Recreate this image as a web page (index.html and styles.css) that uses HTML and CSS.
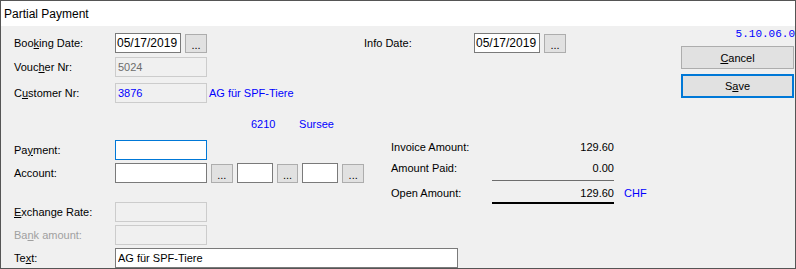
FILE: index.html
```html
<!DOCTYPE html>
<html>
<head>
  <meta charset="UTF-8">
  <title>Partial Payment</title>
  <link rel="stylesheet" href="styles.css">
</head>
<body>
  <div class="window">
    <div class="titlebar">Partial Payment</div>

    <div class="client">
      <div class="form">
        <!-- left column: booking data -->
        <div class="col-left">
          <div class="row">
            <span class="label">Boo<u>k</u>ing Date:</span>
            <input class="field date" value="05/17/2019" readonly>
            <button class="dots">...</button>
          </div>
          <div class="row row-voucher">
            <span class="label">Vouc<u>h</u>er Nr:</span>
            <input class="field wide disabled" value="5024" readonly>
          </div>
          <div class="row row-customer">
            <span class="label">C<u>u</u>stomer Nr:</span>
            <input class="field wide disabled link" value="3876" readonly>
            <span class="customer-name">AG für SPF-Tiere</span>
          </div>
          <div class="row-city">
            <span class="zip">6210</span>
            <span class="city">Sursee</span>
          </div>
          <div class="row row-payment">
            <span class="label">Pa<u>y</u>ment:</span>
            <input class="field wide focused" value="" readonly>
          </div>
          <div class="row row-account">
            <span class="label">Account:</span>
            <input class="field wide" value="" readonly>
            <button class="dots">...</button>
            <input class="field small" value="" readonly>
            <button class="dots">...</button>
            <input class="field small" value="" readonly>
            <button class="dots">...</button>
          </div>
          <div class="row row-exchange">
            <span class="label"><u>E</u>xchange Rate:</span>
            <input class="field wide disabled" value="" readonly>
          </div>
          <div class="row row-bank">
            <span class="label muted">Ba<u>n</u>k amount:</span>
            <input class="field wide disabled" value="" readonly>
          </div>
        </div>

        <!-- middle column: info date and totals -->
        <div class="col-mid">
          <div class="row">
            <span class="label label-info">Info Date:</span>
            <input class="field date" value="05/17/2019" readonly>
            <button class="dots">...</button>
          </div>

          <div class="amounts">
            <div class="amount-row">
              <span class="amount-label">Invoice Amount:</span>
              <span class="amount-value">129.60</span>
            </div>
            <div class="amount-row">
              <span class="amount-label">Amount Paid:</span>
              <span class="amount-value">0.00</span>
            </div>
            <div class="rule"></div>
            <div class="amount-row amount-open">
              <span class="amount-label">Open Amount:</span>
              <span class="amount-value">129.60</span>
              <span class="currency">CHF</span>
            </div>
            <div class="rule rule-total"></div>
          </div>
        </div>

        <div class="row row-text">
          <span class="label">Te<u>x</u>t:</span>
          <input class="field text" value="AG für SPF-Tiere" readonly>
        </div>
      </div>

      <div class="actions">
        <div class="version">5.10.06.0</div>
        <button class="action"><u>C</u>ancel</button>
        <button class="action default">S<u>a</u>ve</button>
      </div>
    </div>
  </div>
</body>
</html>
```

FILE: styles.css
```css
:root {
  --face: #f0f0f0;
  --frame: #555555;
  --edge: #7a7a7a;
  --edge-off: #cccccc;
  --btn: #e1e1e1;
  --btn-edge: #adadad;
  --accent: #0078d7;
  --link: #0000ff;
}

html, body {
  margin: 0;
  padding: 0;
}

body {
  font-family: 'Liberation Sans', Arial, sans-serif;
  font-size: 11px;
  color: #000;
  background-color: var(--face);
}

.window {
  width: 796px;
  height: 269px;
  box-sizing: border-box;
  border: 1px solid var(--frame);
  background-color: var(--face);
  overflow: hidden;
}

.titlebar {
  height: 25px;
  display: flex;
  align-items: center;
  padding-left: 3px;
  background-color: #fff;
  font-size: 12px;
}

.client {
  display: flex;
  height: 242px;
}

.form {
  flex: 1;
  display: grid;
  grid-template-columns: 350px 1fr;
  align-content: start;
  padding: 7px 0 0 13px;
}

.row {
  display: flex;
  align-items: center;
  height: 20px;
}

.label {
  width: 101px;
  flex-shrink: 0;
  white-space: nowrap;
}

.label.muted {
  color: #a0a0a0;
}

u {
  text-decoration-thickness: 1px;
  text-underline-offset: 1px;
}

/* text boxes */
.field {
  box-sizing: border-box;
  height: 20px;
  margin: 0;
  padding: 0 2px;
  border: 1px solid var(--edge);
  background-color: #fff;
  font-family: inherit;
  font-size: 11px;
  color: #000;
  outline: none;
}

.field.date {
  width: 66px;
  font-size: 12px;
  padding: 0 1px;
}

.field.wide {
  width: 92px;
}

.field.small {
  width: 36px;
}

.field.text {
  width: 343px;
}

.field.disabled {
  border-color: var(--edge-off);
  background-color: var(--face);
  color: #6d6d6d;
}

.field.link {
  color: var(--link);
}

.field.focused {
  border-color: var(--accent);
}

.dots {
  box-sizing: border-box;
  width: 22px;
  height: 19px;
  margin: 0 0 0 4px;
  padding: 4px 0 0;
  border: 1px solid var(--btn-edge);
  background-color: var(--btn);
  font-family: inherit;
  font-size: 11px;
  line-height: 11px;
  color: #000;
}

.row-account .field.small {
  margin-left: 4px;
}

.row-voucher { margin-top: 4px; }
.row-customer { margin-top: 6px; }
.row-payment { margin-top: 10px; }
.row-account { margin-top: 3px; }
.row-exchange { margin-top: 19px; }
.row-bank { margin-top: 3px; }

.row-text {
  grid-column: 1 / -1;
  margin-top: 3px;
}

.customer-name {
  margin-left: 2px;
  color: var(--link);
  white-space: nowrap;
}

.row-city {
  height: 12px;
  margin-top: 15px;
  padding-left: 237px;
  line-height: 12px;
  color: var(--link);
}

.zip {
  display: inline-block;
  width: 45px;
}

/* middle column */
.label-info {
  width: 110px;
}

.amounts {
  margin-top: 87px;
  padding-left: 27px;
}

.amount-row {
  display: flex;
  align-items: center;
  height: 14px;
}

.amount-row + .amount-row {
  margin-top: 7px;
}

.amount-label {
  width: 101px;
}

.amount-value {
  width: 122px;
  text-align: right;
}

.currency {
  margin-left: 10px;
  color: var(--link);
}

.rule {
  width: 122px;
  height: 1px;
  margin: 5px 0 0 101px;
  background-color: #6d6d6d;
}

.amount-open {
  margin-top: 5px;
}

.rule-total {
  height: 2px;
  margin-top: 2px;
  background-color: #000;
}

/* right column */
.actions {
  width: 113px;
  margin-right: 1px;
  padding-top: 2px;
  display: flex;
  flex-direction: column;
}

.version {
  height: 13px;
  line-height: 13px;
  text-align: right;
  margin-right: -1px;
  font-family: 'Liberation Mono', 'Courier New', monospace;
  font-size: 11px;
  color: var(--link);
}

.action {
  box-sizing: border-box;
  height: 23px;
  margin: 5px 0 0;
  padding: 0;
  border: 1px solid var(--btn-edge);
  background-color: var(--btn);
  font-family: inherit;
  font-size: 11px;
  color: #000;
}

.action.default {
  height: 24px;
  border: 2px solid var(--accent);
}
```
